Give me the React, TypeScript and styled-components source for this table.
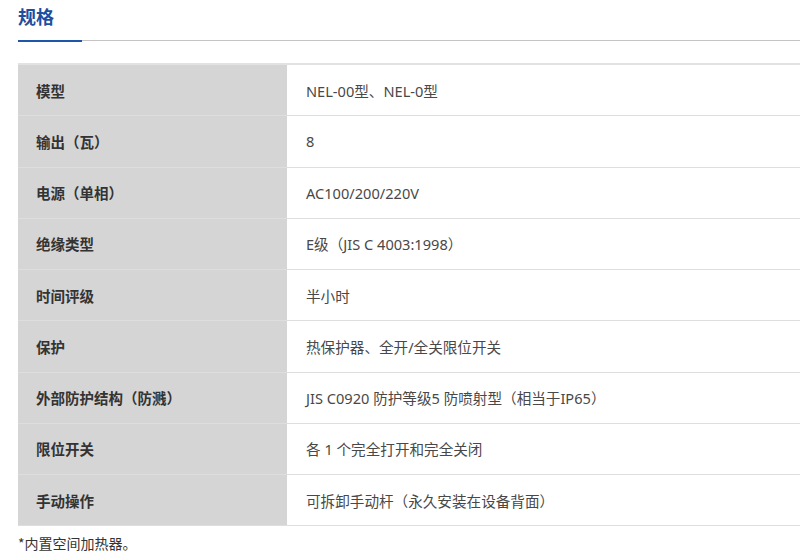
import React from "react";
import styled, { createGlobalStyle } from "styled-components";

const GlobalStyle = createGlobalStyle`
  html, body {
    margin: 0;
    padding: 0;
    background: #ffffff;
    font-family: "Noto Sans", "Noto Sans CJK SC", sans-serif;
    overflow: hidden;
  }
`;

const Page = styled.div`
  padding: 4px 0 0 18px;
  width: 782px;
`;

const Heading = styled.h2`
  margin: 0;
  font-size: 18px;
  line-height: 24px;
  font-weight: 700;
  color: #1d4f9f;
  font-family: "Noto Sans CJK SC", sans-serif;
`;

const HeadingRule = styled.div`
  margin-top: 12px;
  height: 1px;
  background: #c4c4c4;
  position: relative;

  &::before {
    content: "";
    position: absolute;
    left: 0;
    top: -0.5px;
    width: 64px;
    height: 2px;
    background: #1e56a8;
  }
`;

const Table = styled.div`
  margin-top: 22px;
  border-top: 2px solid #e2e2e2;
`;

const Row = styled.div`
  display: grid;
  grid-template-columns: 269px 1fr;
  height: 50.25px;
  border-bottom: 1px solid #dedede;
`;

const Label = styled.div`
  background: #d5d5d5;
  display: flex;
  align-items: center;
  padding-left: 18px;
  font-size: 14.5px;
  font-weight: 700;
  color: #333333;
  font-family: "Noto Sans CJK SC", sans-serif;
`;

const Value = styled.div`
  display: flex;
  align-items: center;
  padding-left: 19px;
  font-size: 14.6px;
  color: #484848;
`;

const Note = styled.p`
  margin: 7px 0 0;
  font-size: 14px;
  line-height: 20px;
  color: #333333;
  font-family: "Noto Sans CJK SC", sans-serif;
`;

const specs: [string, string][] = [
  ["模型", "NEL-00型、NEL-0型"],
  ["输出（瓦）", "8"],
  ["电源（单相）", "AC100/200/220V"],
  ["绝缘类型", "E级（JIS C 4003:1998）"],
  ["时间评级", "半小时"],
  ["保护", "热保护器、全开/全关限位开关"],
  ["外部防护结构（防溅）", "JIS C0920 防护等级5 防喷射型（相当于IP65）"],
  ["限位开关", "各 1 个完全打开和完全关闭"],
  ["手动操作", "可拆卸手动杆（永久安装在设备背面）"],
];

const App: React.FC = () => (
  <>
    <GlobalStyle />
    <Page>
      <Heading>规格</Heading>
      <HeadingRule />
      <Table>
        {specs.map(([k, v]) => (
          <Row key={k}>
            <Label>{k}</Label>
            <Value>{v}</Value>
          </Row>
        ))}
      </Table>
      <Note>*内置空间加热器。</Note>
    </Page>
  </>
);

export default App;
